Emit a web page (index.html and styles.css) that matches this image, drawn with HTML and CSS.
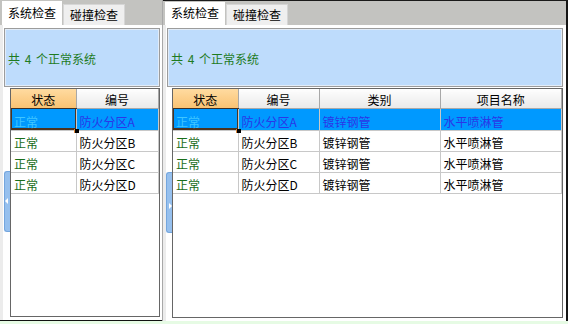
FILE: index.html
```html
<!DOCTYPE html>
<html>
<head>
    <title>系统检查</title>
    <meta charset="utf-8">
    <link rel="stylesheet" href="styles.css">
</head>
<body>
    <div class="screen">
        <div class="panel panel-left">
            <div class="tabbar">
                <span class="tab active">系统检查</span>
                <span class="tab">碰撞检查</span>
            </div>
            <div class="content">
                <div class="summary">共 4 个正常系统</div>
                <div class="body">
                    <div class="handle handle-left"></div>
                    <div class="grid">
                        <table>
                            <colgroup><col class="c-state"><col class="c-code"></colgroup>
                            <tr><th class="sorted">状态</th><th>编号</th></tr>
                            <tr class="selected"><td class="ok current">正常</td><td>防火分区A</td></tr>
                            <tr><td class="ok">正常</td><td>防火分区B</td></tr>
                            <tr><td class="ok">正常</td><td>防火分区C</td></tr>
                            <tr><td class="ok">正常</td><td>防火分区D</td></tr>
                        </table>
                    </div>
                </div>
            </div>
        </div>
        <div class="gap"></div>
        <div class="panel panel-right">
            <div class="tabbar">
                <span class="tab active">系统检查</span>
                <span class="tab">碰撞检查</span>
            </div>
            <div class="content">
                <div class="summary">共 4 个正常系统</div>
                <div class="body">
                    <div class="handle handle-right"></div>
                    <div class="grid">
                        <table>
                            <colgroup><col class="c-state"><col class="c-code"><col class="c-type"><col></colgroup>
                            <tr><th class="sorted">状态</th><th>编号</th><th>类别</th><th>项目名称</th></tr>
                            <tr class="selected"><td class="ok current">正常</td><td>防火分区A</td><td>镀锌钢管</td><td>水平喷淋管</td></tr>
                            <tr><td class="ok">正常</td><td>防火分区B</td><td>镀锌钢管</td><td>水平喷淋管</td></tr>
                            <tr><td class="ok">正常</td><td>防火分区C</td><td>镀锌钢管</td><td>水平喷淋管</td></tr>
                            <tr><td class="ok">正常</td><td>防火分区D</td><td>镀锌钢管</td><td>水平喷淋管</td></tr>
                        </table>
                    </div>
                </div>
            </div>
        </div>
    </div>
    <div class="footer"></div>
</body>
</html>
```
FILE: styles.css
```css
body {
    margin: 0;
    background-color: #e6fbe4;
    font-family: "Noto Sans CJK SC", "Microsoft YaHei", sans-serif;
    font-size: 12px;
    color: #000;
}
.screen {
    display: flex;
    height: 321px;
    width: 568px;
}
.panel {
    display: flex;
    flex-direction: column;
    box-sizing: border-box;
    background: #ececec;
}
.panel-left {
    width: 162px;
    border-bottom: 1px solid #111;
}
.gap {
    width: 1px;
    background: #a8a8a8;
}
.panel-right {
    width: 405px;
    border-top: 1px solid #1a1a1a;
    border-right: 2px solid #151515;
}
.tabbar {
    height: 25px;
    flex: none;
    background: #c3c3c0;
    display: flex;
    align-items: flex-end;
    padding-left: 2px;
}
.panel-right .tabbar {
    height: 24px;
}
.tab {
    box-sizing: border-box;
    height: 21px;
    padding: 0 6px;
    line-height: 20px;
    background: #efefef;
    border: 1px solid #d6d6d6;
    border-bottom: none;
    margin-left: 1px;
}
.tab.active {
    height: 24px;
    line-height: 23px;
    background: #fff;
    border: none;
    margin-left: 0;
}
.panel-right .tab.active {
    height: 23px;
    line-height: 22px;
}
.content {
    flex: 1;
    display: flex;
    flex-direction: column;
    background: #fff;
    border-left: 3px solid #ececec;
    padding: 3px 2px 3px 1px;
}
.panel-right .content {
    padding-right: 3px;
    padding-bottom: 3px;
}
.summary {
    height: 59px;
    box-sizing: border-box;
    flex: none;
    background: #bedcfc;
    border: 1px solid #9c9c9c;
    box-shadow: inset 0 0 0 1px #e2ecf8;
    color: #1e7b1e;
    display: flex;
    align-items: center;
    padding: 2px 0 0 3px;
    word-spacing: 2px;
}
.body {
    flex: 1;
    position: relative;
    display: flex;
    padding: 1px 0 0 6px;
}
.panel-right .body {
    padding-left: 5px;
}
.grid {
    flex: 1;
    border: 1px solid #666;
    background: #fff;
}
table {
    border-collapse: collapse;
    table-layout: fixed;
}
.c-state { width: 65px; }
.c-code { width: 82px; }
.panel-right .c-code { width: 81px; }
.c-type { width: 121px; }
.panel-right table { width: 389px; }
th {
    padding: 4px 0 1px;
    font-weight: normal;
    line-height: 14px;
    text-align: center;
    background: linear-gradient(#fefefe, #e9e9e9);
    border-right: 1px solid #a8a8a8;
    border-bottom: 1px solid #a8a8a8;
}
th.sorted {
    background: linear-gradient(#ffdba0, #f9c273);
    border-bottom-color: #3e3026;
}
td {
    padding: 5px 0 1px 3px;
    line-height: 14px;
    white-space: nowrap;
    overflow: hidden;
    border: 1px solid #c8c8c8;
    border-top: none;
    border-left: none;
}
tr.selected td {
    padding-top: 6px;
}
td.ok {
    color: #1a6e1a;
}
tr.selected td {
    background: #0099ff;
    color: #2a36e8;
}
tr.selected td.ok {
    color: #3fc6ff;
}
td.current {
    position: relative;
    overflow: visible;
    box-shadow: inset 1px 0 0 #4b3322, inset -1px 0 0 #4b3322, inset 0 -2px 0 #4b3322;
}
td.current::after {
    content: "";
    position: absolute;
    right: -3px;
    bottom: -3px;
    width: 4px;
    height: 4px;
    background: #000;
    border-left: 1px solid #e08a3c;
}
.handle {
    position: absolute;
    left: 0;
    top: 84px;
    width: 5px;
    height: 59px;
    background: #96c0ee;
    border: 1px solid #74a6de;
    border-right: none;
    border-radius: 3px 0 0 3px;
}
.panel-right .handle {
    left: -1px;
    top: 85px;
}
.handle::after {
    content: "";
    position: absolute;
    top: 26px;
    width: 0;
    height: 0;
    border-top: 3px solid transparent;
    border-bottom: 3px solid transparent;
}
.handle-left::after {
    left: 0;
    border-right: 3px solid #fff;
}
.handle-right::after {
    left: 2px;
    top: 30px;
    border-left: 3px solid #fff;
}
.footer {
    height: 3px;
    background: #e6fbe4;
}
```
